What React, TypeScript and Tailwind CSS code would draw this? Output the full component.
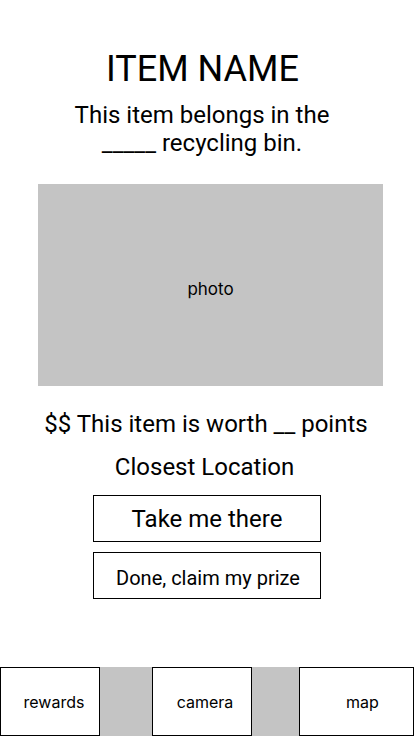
import React from "react";

export default function App() {
  const roboto = { fontFamily: "Roboto, 'Liberation Sans', sans-serif" };
  const inter = { fontFamily: "Inter, 'Liberation Sans', sans-serif" };
  return (
    <div className="w-[414px] h-[736px] bg-white text-black flex flex-col relative overflow-hidden" style={roboto}>
      <h1 className="mt-[48px] pr-[9px] text-[36px] leading-[42px] text-center">ITEM NAME</h1>
      <p className="mt-[11px] pr-[10px] text-[24px] leading-[28px] text-center">
        This item belongs in the
        <br />
        _____ recycling bin.
      </p>
      <div className="mt-[27px] mx-[38px] w-[345px] h-[202px] bg-[#c4c4c4] flex items-center justify-center pt-[7px]">
        <span className="text-[17px] leading-[20px]" style={inter}>photo</span>
      </div>
      <p className="mt-[24px] pr-[2px] text-[24px] leading-[28px] text-center">$$ This item is worth __ points</p>
      <p className="mt-[15px] pr-[5px] text-[24px] leading-[28px] text-center">Closest Location</p>
      <div className="mt-[14px] flex flex-col items-center gap-[10px]">
        <button className="w-[228px] h-[47px] border border-black text-[24px] flex items-center justify-center">Take me there</button>
        <button className="w-[228px] h-[47px] border border-black text-[20px] flex items-center justify-center pt-[5px] pl-[2px]">Done, claim my prize</button>
      </div>
      <div className="mt-auto h-[69px] bg-[#c4c4c4] flex" style={inter}>
        <div className="w-[100px] bg-white border border-black flex items-center justify-center pl-[8px] text-[16px]">rewards</div>
        <div className="ml-[52px] w-[100px] bg-white border border-black flex items-center justify-center pl-[6px] text-[16px]">camera</div>
        <div className="ml-[47px] w-[115px] bg-white border border-black flex items-center justify-center pl-[12px] text-[16px]">map</div>
      </div>
    </div>
  );
}
